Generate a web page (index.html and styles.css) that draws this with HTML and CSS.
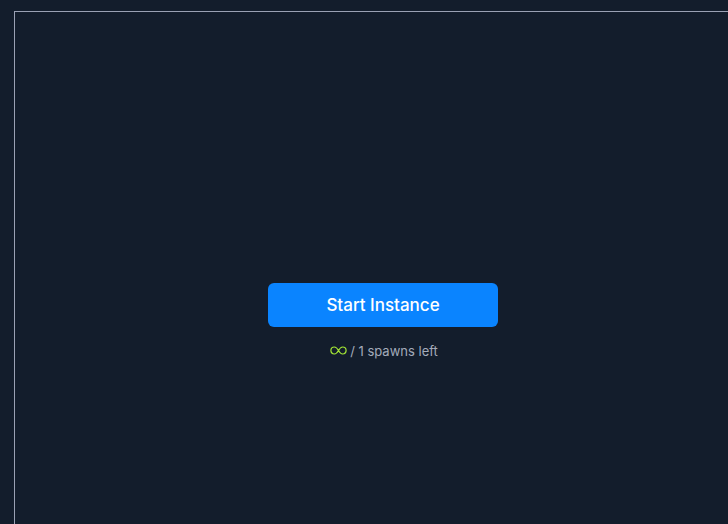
FILE: index.html
```html
<!DOCTYPE html>
<html>
<head>
<meta charset="utf-8">
<link rel="stylesheet" href="styles.css">
</head>
<body>
<div class="frame">
  <div class="panel">
    <button class="start-btn">Start Instance</button>
    <div class="spawns"><svg class="inf" width="17" height="9" viewBox="0 0 17 9" aria-label="∞"><path d="M8.5 4.5C7.3 2.4 6 1 4.4 1A3.5 3.5 0 0 0 4.4 8C6 8 7.3 6.6 8.5 4.5S11 1 12.6 1A3.5 3.5 0 0 1 12.6 8C11 8 9.7 6.6 8.5 4.5Z" fill="none" stroke="#a3e635" stroke-width="1.2"/></svg><span class="txt">/ 1 spawns left</span></div>
  </div>
</div>
</body>
</html>
```
FILE: styles.css
```css
html, body {
  margin: 0;
  padding: 0;
  background: #131d2c;
  overflow: hidden;
  height: 100%;
}
.frame {
  height: 100%;
  overflow: hidden;
  box-sizing: border-box;
  padding: 11px 0 0 14px;
}
.panel {
  box-sizing: border-box;
  width: 738px;
  height: 619px;
  border: 1px solid #9aa1b4;
  display: flex;
  flex-direction: column;
  align-items: center;
  justify-content: center;
  gap: 16px;
  font-family: Inter, "Noto Sans", sans-serif;
}
.start-btn {
  width: 230px;
  height: 44px;
  border: none;
  border-radius: 6px;
  background: #0a84ff;
  color: #ffffff;
  font-family: Inter, "Noto Sans", sans-serif;
  font-size: 17px;
  font-weight: 500;
  cursor: pointer;
}
.spawns {
  display: flex;
  align-items: center;
  gap: 3px;
  color: #a3abba;
  font-size: 13px;
  line-height: 16px;
  margin-left: 2px;
}
.inf {
  display: block;
}
```
